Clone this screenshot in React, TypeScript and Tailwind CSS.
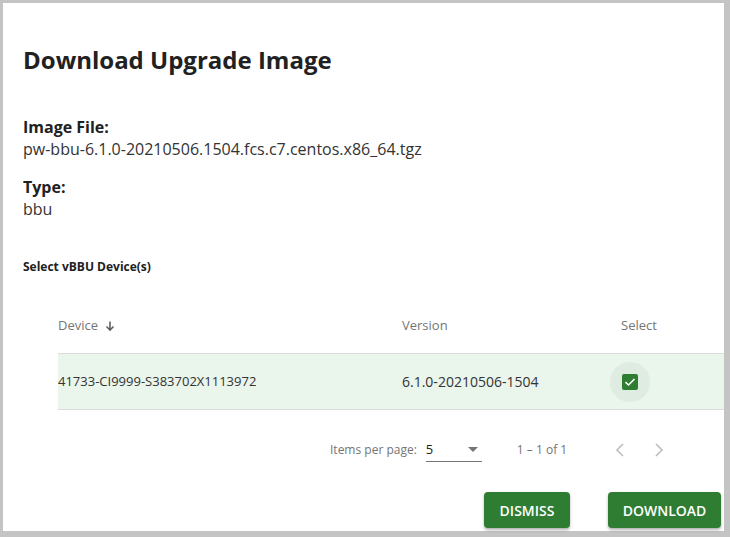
import React from "react";

function Check() {
  return (
    <svg width="16" height="16" viewBox="0 0 16 16">
      <rect x="0" y="0" width="16" height="16" rx="2" fill="#2e7d32" />
      <path d="M3.5 8.2 L6.5 11 L12.5 5" stroke="#fff" strokeWidth="1.6" fill="none" />
    </svg>
  );
}

export default function App() {
  return (
    <div
      className="w-[730px] h-[537px] bg-[#c4c4c4] pt-[3px] pl-[3px] pr-[6px] pb-[6px]"
      style={{ fontFamily: '"Open Sans", sans-serif' }}
    >
      <div className="w-full h-full bg-white pl-[20px] flex flex-col">
        <h1 className="mt-[41px] text-[24px] leading-[32px] font-bold text-[#212121]">
          Download Upgrade Image
        </h1>
        <div className="mt-[40px] text-[16px] leading-[22px] text-[#333]">
          <div className="font-bold text-[#212121]">Image File:</div>
          <div>pw-bbu-6.1.0-20210506.1504.fcs.c7.centos.x86_64.tgz</div>
        </div>
        <div className="mt-[16px] text-[16px] leading-[22px] text-[#333]">
          <div className="font-bold text-[#212121]">Type:</div>
          <div>bbu</div>
        </div>
        <div className="mt-[39px] text-[12px] leading-[16px] font-bold text-[#212121]">
          Select vBBU Device(s)
        </div>
        <div className="ml-[35px] mt-[23px] text-[13px]">
          <div className="flex h-[56px] items-center text-[#757575] border-b border-[#dcdcdc]">
            <div className="w-[344px] flex items-center gap-[6px]">
              Device
              <svg width="12" height="12" viewBox="0 0 12 12">
                <path d="M6 1.5 V10 M2.5 6.5 L6 10 L9.5 6.5" stroke="#616161" strokeWidth="1.6" fill="none" />
              </svg>
            </div>
            <div className="w-[219px]">Version</div>
            <div>Select</div>
          </div>
          <div className="flex h-[56px] items-center text-[#333] bg-[#eaf5eb] border-b border-[#dcdcdc]">
            <div className="w-[344px]">41733-CI9999-S383702X1113972</div>
            <div className="w-[219px] text-[14px]">6.1.0-20210506-1504</div>
            <div className="relative w-[18px] h-[16px] flex items-center">
              <div className="absolute left-[-11px] top-[-12px] w-[40px] h-[40px] rounded-full bg-[#dfece1]" />
              <div className="relative ml-[1px]">
                <Check />
              </div>
            </div>
          </div>
        </div>
        <div className="mt-[20px] flex items-center h-[40px] text-[12px] text-[#757575]">
          <div className="ml-[307px]">Items per page:</div>
          <div className="ml-[9px] w-[56px] h-[24px] border-b border-[#757575] flex items-center justify-between text-[13px] text-[#212121]">
            <span>5</span>
            <svg width="12" height="6" viewBox="0 0 12 6" className="mr-[3px]">
              <path d="M1 0 L11 0 L6 5 Z" fill="#757575" />
            </svg>
          </div>
          <div className="ml-[35px]">1 – 1 of 1</div>
          <svg width="12" height="16" viewBox="0 0 12 16" className="ml-[47px]">
            <path d="M9 2 L3 8 L9 14" stroke="#bdbdbd" strokeWidth="1.6" fill="none" />
          </svg>
          <svg width="12" height="16" viewBox="0 0 12 16" className="ml-[27px]">
            <path d="M3 2 L9 8 L3 14" stroke="#bdbdbd" strokeWidth="1.6" fill="none" />
          </svg>
        </div>
        <div className="mt-[22px] flex justify-end pr-[3px] gap-[38px]">
          <button className="w-[86px] h-[36px] bg-[#2e7d32] text-white text-[14px] font-semibold rounded-[4px] shadow-[0_2px_3px_rgba(0,0,0,0.3)]">
            DISMISS
          </button>
          <button className="w-[113px] h-[36px] bg-[#2e7d32] text-white text-[14px] font-semibold rounded-[4px] shadow-[0_2px_3px_rgba(0,0,0,0.3)]">
            DOWNLOAD
          </button>
        </div>
      </div>
    </div>
  );
}
